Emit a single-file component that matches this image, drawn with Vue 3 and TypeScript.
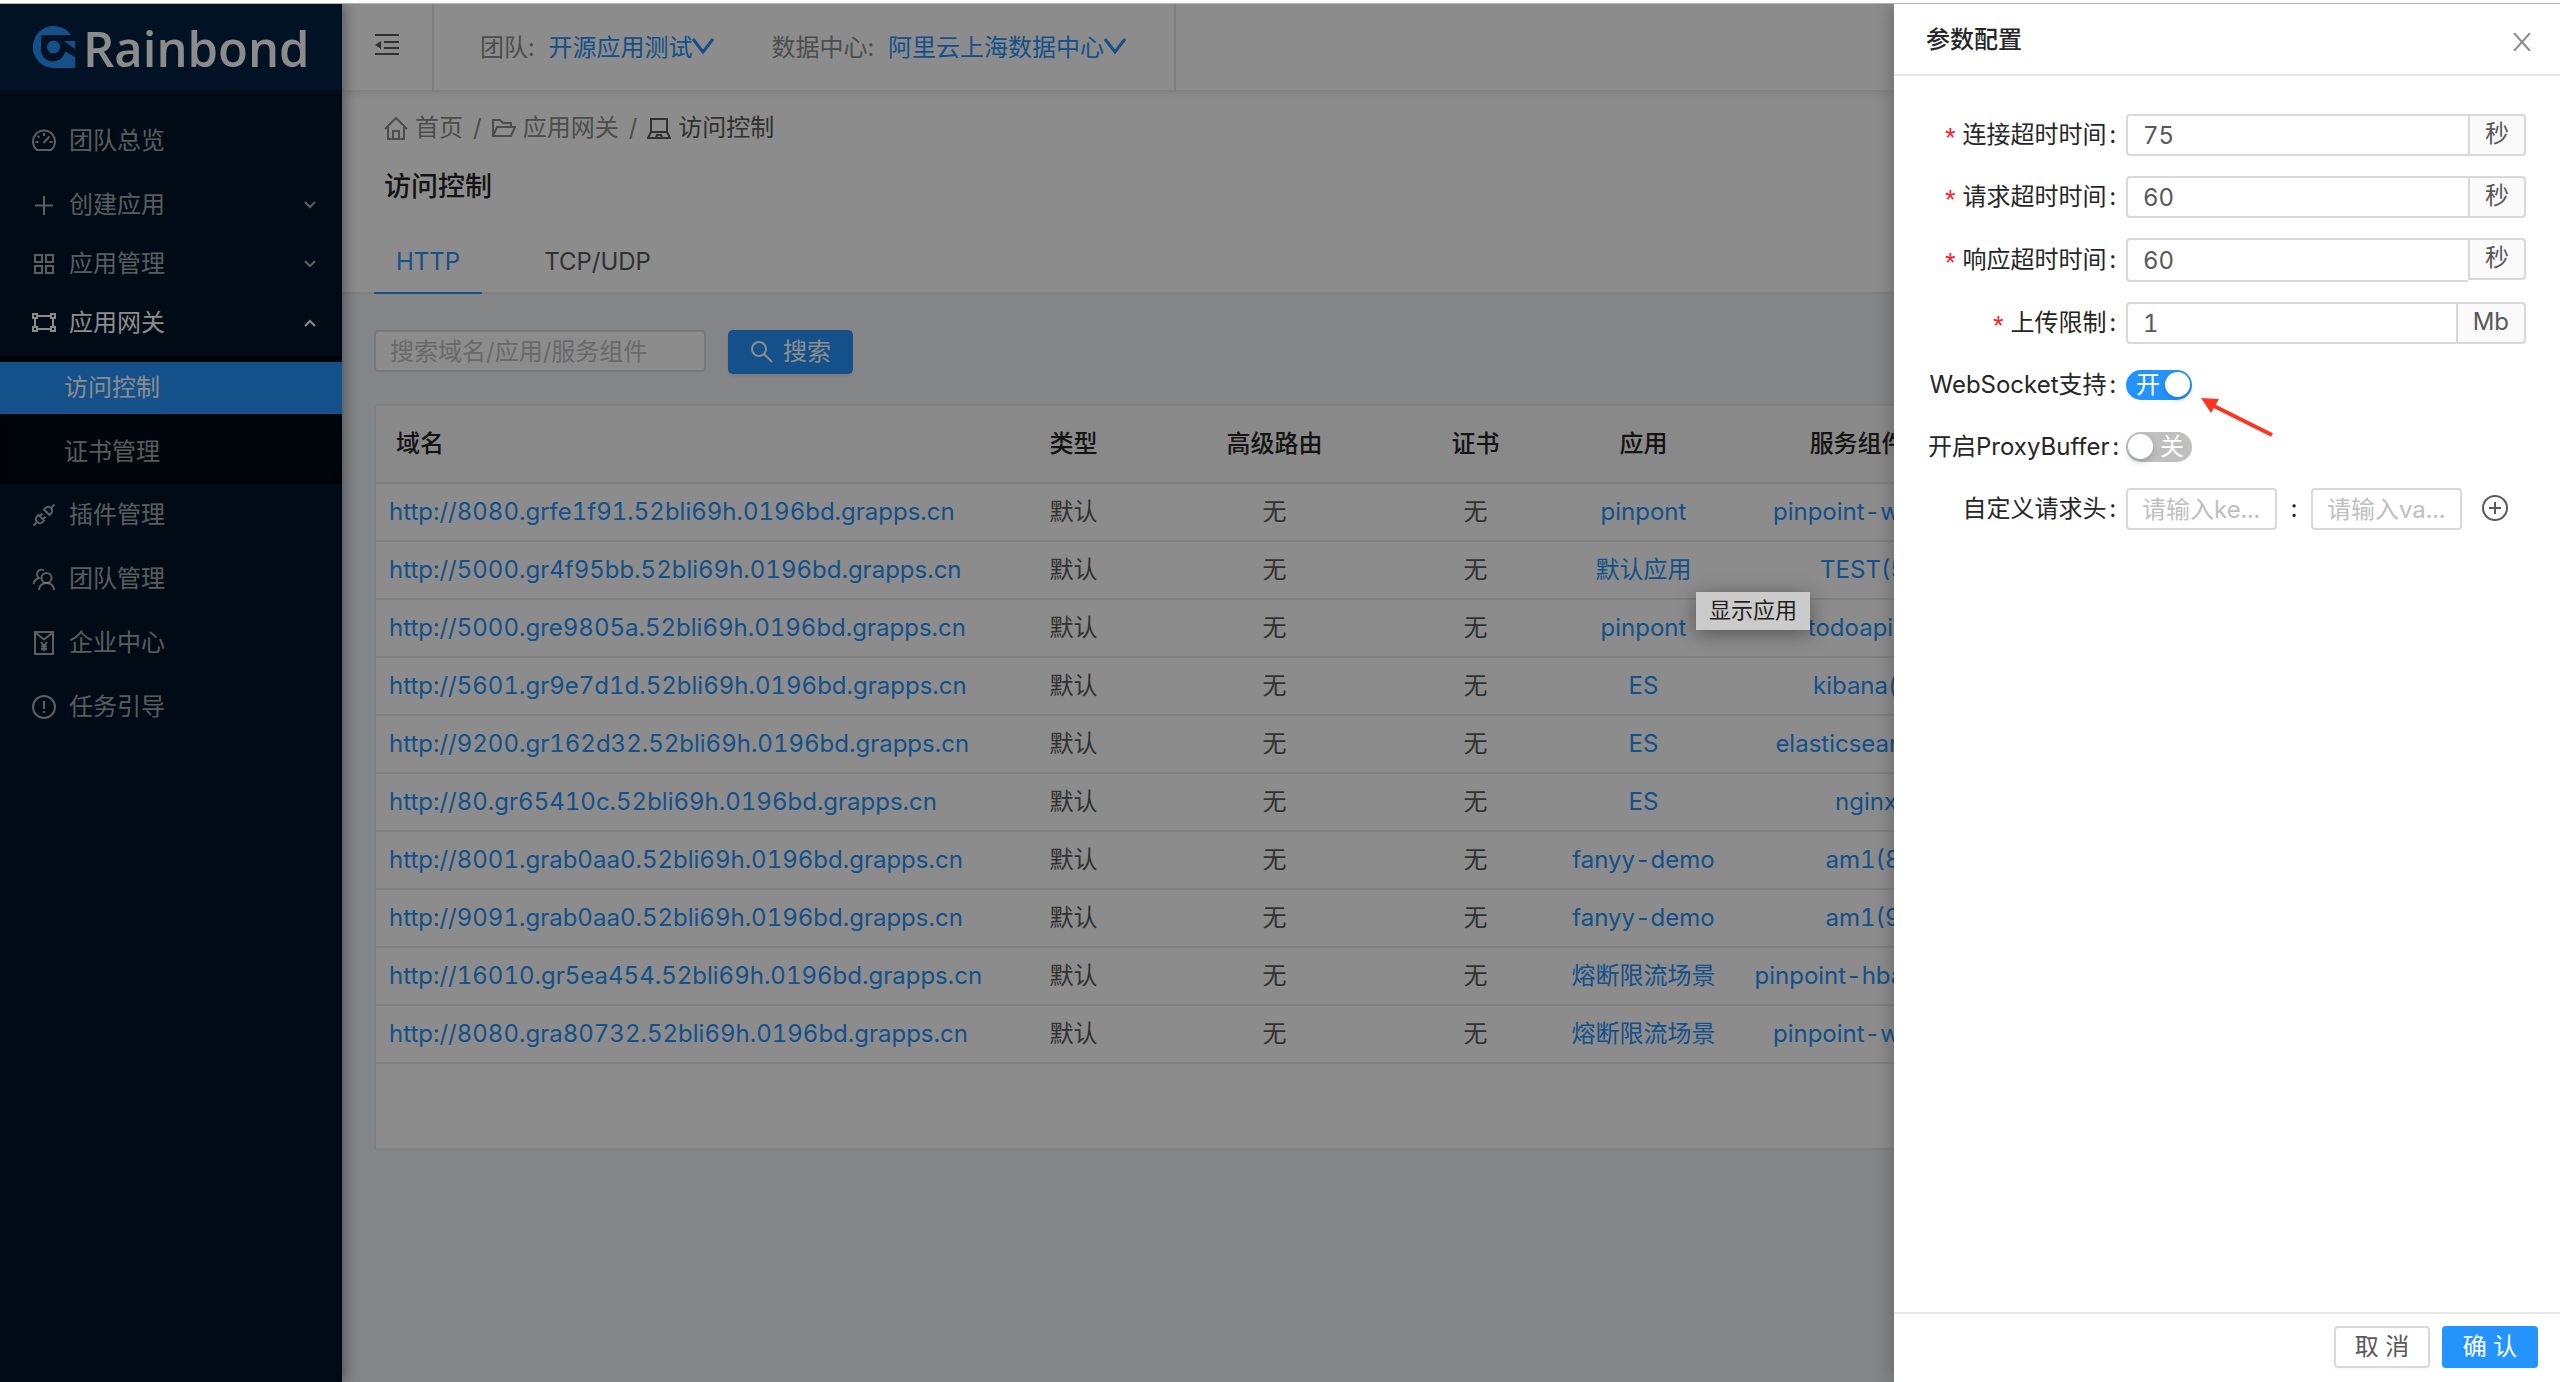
<script setup lang="ts">
import { ref } from 'vue'

interface Rule {
  domain: string
  app: string
  component: string
}

interface MenuItem {
  label: string
  icon: string
  arrow?: 'down' | 'up'
  open?: boolean
  children?: { label: string; active: boolean }[]
}

interface TimeoutField {
  id: string
  label: string
  value: string
  unit: string
}

const menu: MenuItem[] = [
  { label: '团队总览', icon: 'dashboard' },
  { label: '创建应用', icon: 'plus', arrow: 'down' },
  { label: '应用管理', icon: 'appstore', arrow: 'down' },
  {
    label: '应用网关',
    icon: 'gateway',
    arrow: 'up',
    open: true,
    children: [
      { label: '访问控制', active: true },
      { label: '证书管理', active: false },
    ],
  },
  { label: '插件管理', icon: 'api' },
  { label: '团队管理', icon: 'team' },
  { label: '企业中心', icon: 'enterprise' },
  { label: '任务引导', icon: 'guide' },
]

const rules: Rule[] = [
  { domain: 'http://8080.grfe1f91.52bli69h.0196bd.grapps.cn', app: 'pinpont', component: 'pinpoint-web(8080)' },
  { domain: 'http://5000.gr4f95bb.52bli69h.0196bd.grapps.cn', app: '默认应用', component: 'TEST(5000)' },
  { domain: 'http://5000.gre9805a.52bli69h.0196bd.grapps.cn', app: 'pinpont', component: 'todoapi(5000)' },
  { domain: 'http://5601.gr9e7d1d.52bli69h.0196bd.grapps.cn', app: 'ES', component: 'kibana(5601)' },
  { domain: 'http://9200.gr162d32.52bli69h.0196bd.grapps.cn', app: 'ES', component: 'elasticsearch(9200)' },
  { domain: 'http://80.gr65410c.52bli69h.0196bd.grapps.cn', app: 'ES', component: 'nginx(80)' },
  { domain: 'http://8001.grab0aa0.52bli69h.0196bd.grapps.cn', app: 'fanyy-demo', component: 'am1(8001)' },
  { domain: 'http://9091.grab0aa0.52bli69h.0196bd.grapps.cn', app: 'fanyy-demo', component: 'am1(9091)' },
  { domain: 'http://16010.gr5ea454.52bli69h.0196bd.grapps.cn', app: '熔断限流场景', component: 'pinpoint-hbase(16010)' },
  { domain: 'http://8080.gra80732.52bli69h.0196bd.grapps.cn', app: '熔断限流场景', component: 'pinpoint-web(8080)' },
]

const fields = ref<TimeoutField[]>([
  { id: 'connect', label: '连接超时时间', value: '75', unit: '秒' },
  { id: 'request', label: '请求超时时间', value: '60', unit: '秒' },
  { id: 'response', label: '响应超时时间', value: '60', unit: '秒' },
  { id: 'upload', label: '上传限制', value: '1', unit: 'Mb' },
])

const keyword = ref('')
const websocket = ref(true)
const proxyBuffer = ref(false)
const headerKey = ref('')
const headerValue = ref('')
</script>

<template>
  <div class="page">
    <div class="shell">
      <aside class="sidebar">
        <a class="logo" href="#">
          <svg class="logo-mark" viewBox="0 0 42 42" aria-hidden="true">
            <path d="M38 9A21 21 0 1 0 21 42H42V31L32 25.500A12 12 0 0 1 8 21V9Z" />
            <path d="M31 15H42V23Z" />
            <circle cx="20.500" cy="21" r="6.500" />
          </svg>
          <span>Rainbond</span>
        </a>
        <nav class="menu">
          <template v-for="item in menu" :key="item.label">
            <a class="menu-item" :class="{ sub: item.arrow, open: item.open }" href="#">
              <svg class="icon" viewBox="0 0 24 24" aria-hidden="true">
                <g v-if="item.icon === 'dashboard'">
                  <path d="M5 21A11 11 0 1 1 19 21Z" />
                  <path d="M12 4v3M5.500 7l2 1.500M3.500 13h3M17.500 13h3M11.500 14l6-6.500" />
                </g>
                <path v-else-if="item.icon === 'plus'" d="M12 3v19M3 12.500h18" />
                <path v-else-if="item.icon === 'appstore'" d="M3 3h7v7H3zM14 3h7v7h-7zM3 14h7v7H3zM14 14h7v7h-7z" />
                <path
                  v-else-if="item.icon === 'gateway'"
                  d="M1 3h4v4H1zM19 3h4v4h-4zM1 16h4v4H1zM19 16h4v4h-4zM5 5h14M5 18h14M3 7v9M21 7v9"
                />
                <path
                  v-else-if="item.icon === 'api'"
                  d="M1.500 22.500l3-3M22.500 1.500l-3 3M12 6.500l5.500 5.500 2-2a4 4 0 0 0-5.500-5.500zM6.500 12l5.500 5.500-2 2A4 4 0 0 1 4.500 14zM10.500 10.500l-2.500 2.500M13.500 13.500l-2.500 2.500"
                />
                <g v-else-if="item.icon === 'team'">
                  <circle cx="14.500" cy="11" r="5" />
                  <path d="M7 23c0-4 3-7 7.500-7s7.500 3 7.500 7M12 3.500a4.500 4.500 0 1 0-5 7.500c-3 1-5 3-5.500 6" />
                </g>
                <g v-else-if="item.icon === 'enterprise'">
                  <path d="M3 1h18v22H3zM3 1.500l9 7 9-7" />
                  <path d="M9 11l3 4 3-4M12 15v5M9 15.500h6M9 18h6" />
                </g>
                <g v-else>
                  <circle cx="12" cy="12" r="11" />
                  <path d="M12 6v8M12 16v2" />
                </g>
              </svg>
              <span>{{ item.label }}</span>
              <svg v-if="item.arrow" class="chevron" viewBox="0 0 12 8" aria-hidden="true">
                <path :d="item.arrow === 'up' ? 'M1 7l5-5 5 5' : 'M1 1l5 5 5-5'" />
              </svg>
            </a>
            <div v-if="item.children" class="submenu">
              <a v-for="child in item.children" :key="child.label" href="#" :class="{ active: child.active }">
                {{ child.label }}
              </a>
            </div>
          </template>
        </nav>
      </aside>

      <main class="main">
        <header class="topbar">
          <button class="fold" type="button" aria-label="收起菜单">
            <svg class="icon" viewBox="0 0 24 24" aria-hidden="true">
              <path d="M0 2h24M9 9h15M9 15h15M0 21h24" />
              <path class="solid" d="M0 12l6-4v8z" />
            </svg>
          </button>
          <div class="context">
            <div class="picker">
              <span>团队:</span>
              <a href="#">开源应用测试<svg viewBox="0 0 22 16" aria-hidden="true"><path d="M1 1l10 13L21 1" /></svg></a>
            </div>
            <div class="picker">
              <span>数据中心:</span>
              <a href="#">阿里云上海数据中心<svg viewBox="0 0 22 16" aria-hidden="true"><path d="M1 1l10 13L21 1" /></svg></a>
            </div>
          </div>
        </header>

        <section class="page-head">
          <nav class="crumbs">
            <a href="#">
              <svg class="icon" viewBox="0 0 24 24" aria-hidden="true">
                <path d="M1 13L12 2l11 11M4 11v12h16V11M9 23v-8h6v8" />
              </svg>
              首页
            </a>
            <span>/</span>
            <a href="#">
              <svg class="icon" viewBox="0 0 24 24" aria-hidden="true">
                <path d="M1 20V4h7l3 3h8v4M1 20l4-9h18l-4 9z" />
              </svg>
              应用网关
            </a>
            <span>/</span>
            <a class="current" href="#">
              <svg class="icon" viewBox="0 0 24 24" aria-hidden="true">
                <path d="M4 3h16v13H4zM4 16l-3 6h22l-3-6M9 21l1-2h4l1 2" />
              </svg>
              访问控制
            </a>
          </nav>
          <h1>访问控制</h1>
          <div class="tabs" role="tablist">
            <button class="active" type="button" role="tab">HTTP</button>
            <button type="button" role="tab">TCP/UDP</button>
          </div>
        </section>

        <section class="content">
          <form class="search" @submit.prevent>
            <input v-model="keyword" type="text" placeholder="搜索域名/应用/服务组件" aria-label="搜索" />
            <button type="submit">
              <svg class="icon" viewBox="0 0 24 24" aria-hidden="true">
                <circle cx="10" cy="9" r="7" />
                <path d="M15 14l8 8" />
              </svg>
              搜索
            </button>
          </form>

          <div class="card">
            <table>
              <colgroup>
                <col class="c-domain" />
                <col class="c-type" />
                <col class="c-type" />
                <col class="c-type" />
                <col class="c-app" />
                <col class="c-component" />
                <col />
              </colgroup>
              <thead>
                <tr>
                  <th>域名</th>
                  <th>类型</th>
                  <th>高级路由</th>
                  <th>证书</th>
                  <th>应用</th>
                  <th>服务组件(端口)</th>
                  <th></th>
                </tr>
              </thead>
              <tbody>
                <tr v-for="rule in rules" :key="rule.domain">
                  <td><a href="#">{{ rule.domain }}</a></td>
                  <td>默认</td>
                  <td>无</td>
                  <td>无</td>
                  <td><a class="app-link" href="#">{{ rule.app }}</a></td>
                  <td><a href="#">{{ rule.component }}</a></td>
                  <td></td>
                </tr>
              </tbody>
            </table>
          </div>
        </section>
      </main>

      <div class="mask"></div>
      <div class="tooltip" role="tooltip">显示应用</div>

      <aside class="drawer" role="dialog" aria-label="参数配置">
        <header class="drawer-head">
          <h2>参数配置</h2>
          <button type="button" aria-label="关闭">
            <svg viewBox="0 0 18 18" aria-hidden="true"><path d="M1 0l16 18M17 0L1 18" /></svg>
          </button>
        </header>

        <form class="form" @submit.prevent>
          <div v-for="field in fields" :key="field.id" class="row">
            <label :for="field.id"><i>*</i>{{ field.label }}<b>:</b></label>
            <div class="group" :class="{ tall: field.id === 'response' }">
              <input :id="field.id" v-model="field.value" type="text" />
              <span>{{ field.unit }}</span>
            </div>
          </div>

          <div class="row">
            <label for="websocket">WebSocket支持<b>:</b></label>
            <div class="toggle" :class="{ on: websocket }">
              <input id="websocket" v-model="websocket" type="checkbox" role="switch" />
              <span>{{ websocket ? '开' : '关' }}</span>
            </div>
            <svg class="pointer" viewBox="0 0 72 40" aria-hidden="true">
              <path d="M11 7L71 37" />
              <path class="head" d="M0 0L18 1L10 15Z" />
            </svg>
          </div>

          <div class="row">
            <label for="proxy">开启ProxyBuffer<b>:</b></label>
            <div class="toggle" :class="{ on: proxyBuffer }">
              <input id="proxy" v-model="proxyBuffer" type="checkbox" role="switch" />
              <span>{{ proxyBuffer ? '开' : '关' }}</span>
            </div>
          </div>

          <div class="row">
            <label for="header-key">自定义请求头<b>:</b></label>
            <div class="pair">
              <input id="header-key" v-model="headerKey" type="text" placeholder="请输入ke..." />
              <span>:</span>
              <input v-model="headerValue" type="text" placeholder="请输入va..." aria-label="请求头的值" />
              <button type="button" aria-label="添加">
                <svg viewBox="0 0 28 28" aria-hidden="true">
                  <circle cx="14" cy="13" r="12" />
                  <path d="M14 7v12M8 13h12" />
                </svg>
              </button>
            </div>
          </div>
        </form>

        <footer class="drawer-foot">
          <button type="button">取 消</button>
          <button class="primary" type="button">确 认</button>
        </footer>
      </aside>
    </div>
  </div>
</template>

<style>
body {
  background: #fff;
}
</style>

<style scoped>
* {
  box-sizing: border-box;
}

.page {
  display: flex;
  flex-direction: column;
  min-height: 100vh;
  padding-top: 3px;
  font-family: Inter, 'Noto Sans CJK SC', sans-serif;
  font-size: 24px;
  font-variant-numeric: tabular-nums;
  line-height: 36px;
  color: #595959;
}

a {
  color: #2593fc;
  text-decoration: none;
}

button,
input {
  font: inherit;
}

button {
  padding: 0;
  border: 0;
  background: none;
  cursor: pointer;
}

svg {
  flex: none;
  fill: none;
  stroke: currentColor;
  stroke-width: 2;
}

.icon {
  width: 24px;
  height: 24px;
}

.shell {
  position: relative;
  display: flex;
  flex: 1;
  border-top: 1px solid #b3b3b3;
  overflow: hidden;
}

/* Sidebar */
.sidebar {
  position: relative;
  z-index: 1;
  flex: none;
  width: 342px;
  background: #001529;
  box-shadow: 4px 0 12px rgba(0, 21, 41, 0.35);
}

.logo {
  display: flex;
  align-items: center;
  gap: 8px;
  height: 86px;
  padding-left: 33px;
  background: #002140;
  color: #fff;
  font-family: 'Open Sans', 'Noto Sans', sans-serif;
  font-size: 49px;
  font-weight: 600;
}

.logo span {
  padding-top: 2px;
}

.logo-mark {
  width: 42px;
  height: 42px;
  fill: #2593fc;
  stroke: none;
}

.menu {
  padding-top: 20px;
}

.menu-item {
  display: flex;
  align-items: center;
  gap: 13px;
  height: 52px;
  margin: 5px 0 12px;
  padding: 0 26px 0 32px;
  color: rgba(255, 255, 255, 0.65);
}

.menu-item.sub {
  margin: 0 0 7px;
}

.menu-item.open {
  color: #fff;
}

.chevron {
  width: 12px;
  height: 8px;
  margin-left: auto;
}

.submenu {
  padding: 6px 0;
  background: #000c17;
  box-shadow: inset 0 4px 16px rgba(0, 0, 0, 0.45);
}

.submenu a {
  display: block;
  height: 52px;
  padding-left: 64px;
  line-height: 52px;
  color: rgba(255, 255, 255, 0.65);
}

.submenu a + a {
  margin-top: 12px;
}

.submenu .active {
  background: #2593fc;
  color: #fff;
}

/* Main column */
.main {
  flex: 1;
  min-width: 0;
  background: #f0f2f5;
}

.topbar {
  position: relative;
  display: flex;
  height: 86px;
  background: #fff;
  box-shadow: 0 2px 8px rgba(0, 21, 41, 0.12);
}

.fold {
  width: 92px;
  border-right: 2px solid #e8e8e8;
  color: #595959;
}

.fold svg {
  display: block;
  margin: 0 auto 4px 33px;
}

.solid {
  fill: currentColor;
  stroke: none;
}

.context {
  display: flex;
  align-items: center;
  gap: 57px;
  padding: 2px 48px 0 46px;
  border-right: 2px solid #e8e8e8;
}

.picker {
  display: flex;
  gap: 14px;
  color: #8c8c8c;
}

.picker a {
  display: flex;
  align-items: center;
}

.picker svg {
  width: 22px;
  height: 16px;
  margin-bottom: 4px;
  stroke-width: 3;
}

.page-head {
  padding: 20px 32px 0;
  border-bottom: 2px solid #e8e8e8;
  background: #fff;
}

.crumbs {
  display: flex;
  gap: 10px;
  margin-left: 10px;
  color: #8c8c8c;
}

.crumbs a {
  display: flex;
  align-items: center;
  gap: 7px;
  color: #8c8c8c;
}

.crumbs .current {
  color: #595959;
}

h1 {
  margin: 22px 0 26px 10px;
  font-size: 27px;
  font-weight: 500;
  line-height: 38px;
  color: #262626;
}

.tabs {
  display: flex;
  gap: 40px;
  margin-bottom: -2px;
}

.tabs button {
  height: 62px;
  padding: 0 22px;
  border-bottom: 2px solid transparent;
  color: #595959;
}

.tabs .active {
  border-color: #2593fc;
  color: #2593fc;
}

.content {
  padding: 36px 20px 40px 32px;
}

.search {
  display: flex;
  align-items: flex-start;
  gap: 22px;
}

input[type='text'] {
  min-width: 0;
  height: 42px;
  padding: 0 14px;
  border: 2px solid #d9d9d9;
  border-radius: 4px;
  background: #fff;
  color: #595959;
  outline: 0;
}

input::placeholder {
  color: #bfbfbf;
  opacity: 1;
}

.search input {
  width: 332px;
}

.search button {
  display: flex;
  align-items: center;
  gap: 10px;
  height: 44px;
  padding: 0 22px 0 21px;
  border-radius: 5px;
  background: #2593fc;
  box-shadow: 0 2px 2px rgba(0, 0, 0, 0.08);
  color: #fff;
}

.card {
  margin-top: 30px;
  padding-bottom: 84px;
  border: 2px solid #e8e8e8;
  border-radius: 5px 5px 0 0;
  background: #fff;
}

table {
  width: 100%;
  border-collapse: separate;
  border-spacing: 0;
  table-layout: fixed;
}

.c-domain {
  width: 597px;
}

.c-type {
  width: 201px;
}

.c-app {
  width: 135px;
}

.c-component {
  width: 360px;
}

th,
td {
  height: 58px;
  padding: 0;
  border-bottom: 2px solid #e8e8e8;
  text-align: center;
  white-space: nowrap;
}

th {
  height: 78px;
  background: #fafafa;
  color: #262626;
  font-weight: 500;
}

td:first-child {
  padding-left: 13px;
  text-align: left;
}

th:first-child {
  padding-left: 20px;
  text-align: left;
}

/* Long application names may spill evenly over both sides of the column */
.app-link {
  display: inline-block;
  margin: 0 -10px;
}

/* Overlay layers */
.mask {
  position: absolute;
  inset: 0;
  z-index: 2;
  background: rgba(0, 0, 0, 0.45);
}

.tooltip {
  position: absolute;
  top: 588px;
  left: 1696px;
  z-index: 3;
  padding: 0 13px 2px;
  background: #cbcbcb;
  box-shadow: 0 4px 20px rgba(0, 0, 0, 0.4);
  font-size: 22px;
  color: #1f1f1f;
}

.drawer {
  position: absolute;
  top: 0;
  right: 0;
  bottom: 0;
  z-index: 4;
  display: flex;
  flex-direction: column;
  width: 666px;
  background: #fff;
  box-shadow: -4px 0 16px rgba(0, 0, 0, 0.2);
}

.drawer-head {
  display: flex;
  align-items: center;
  justify-content: space-between;
  height: 72px;
  padding: 2px 29px 0 32px;
  border-bottom: 2px solid #e8e8e8;
}

h2 {
  margin: 0;
  font-size: 24px;
  font-weight: 500;
  color: #262626;
}

.drawer-head button {
  color: #8c8c8c;
}

.drawer-head svg {
  display: block;
  width: 18px;
  height: 18px;
  margin-top: 3px;
}

.form {
  display: flex;
  flex: 1;
  flex-direction: column;
  gap: 20px;
  padding: 38px 34px;
}

.row {
  position: relative;
  display: flex;
  align-items: center;
  min-height: 42px;
}

.row label {
  flex: none;
  width: 198px;
  text-align: right;
  white-space: nowrap;
  color: #262626;
}

.row label i {
  margin-right: 4px;
  color: #f5222d;
  font-family: 'Liberation Mono', monospace;
  font-size: 27px;
  font-style: normal;
  line-height: 24px;
  vertical-align: -5px;
}

.row label b {
  margin: 0 10px 0 3px;
  font-weight: 400;
}

.group {
  display: flex;
  flex: 1;
  align-items: flex-start;
  min-width: 0;
}

.group input[type='text'] {
  flex: 1;
  padding: 0 15px;
  border-right: 0;
  border-radius: 4px 0 0 4px;
}

.group.tall input[type='text'] {
  height: 44px;
}

.group span {
  height: 42px;
  padding: 0 15px;
  border: 2px solid #d9d9d9;
  border-radius: 0 4px 4px 0;
  background: #fafafa;
}

.toggle {
  position: relative;
  width: 66px;
  height: 30px;
  border-radius: 15px;
  background: #bfbfbf;
  color: #fff;
  line-height: 30px;
}

.toggle.on {
  background: #2593fc;
}

.toggle input {
  position: absolute;
  inset: 0;
  width: 100%;
  height: 100%;
  margin: 0;
  appearance: none;
  cursor: pointer;
}

.toggle input::before {
  position: absolute;
  top: 2px;
  left: 2px;
  width: 25px;
  height: 25px;
  border-radius: 50%;
  background: #fff;
  box-shadow: 0 3px 6px rgba(0, 35, 11, 0.2);
  content: '';
}

.toggle.on input::before {
  right: 2px;
  left: auto;
}

.toggle span {
  display: block;
  padding-left: 34px;
}

.toggle.on span {
  padding-left: 10px;
}

.pointer {
  position: absolute;
  top: 34px;
  left: 273px;
  width: 72px;
  height: 40px;
  color: #ff3322;
  stroke-width: 4;
}

.pointer .head {
  fill: currentColor;
  stroke: none;
}

.pair {
  display: flex;
  flex: 1;
  align-items: center;
  min-width: 0;
  color: #262626;
}

.pair input {
  width: 151px;
}

.pair span {
  width: 34px;
  text-align: center;
}

.pair button {
  margin-left: 19px;
  color: #595959;
}

.pair svg {
  display: block;
  width: 28px;
  height: 28px;
}

.drawer-foot {
  display: flex;
  justify-content: flex-end;
  gap: 12px;
  padding: 12px 22px 14px;
  border-top: 2px solid #e8e8e8;
}

.drawer-foot button {
  width: 96px;
  height: 42px;
  border: 2px solid #d9d9d9;
  border-radius: 4px;
  box-shadow: 0 2px 2px rgba(0, 0, 0, 0.03);
  color: #595959;
}

.drawer-foot .primary {
  border-color: #2593fc;
  background: #2593fc;
  color: #fff;
}
</style>
